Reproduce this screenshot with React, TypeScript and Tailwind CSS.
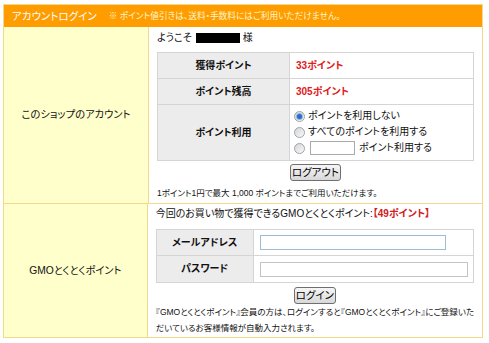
const jp = "font-['Liberation_Sans','Noto_Sans_CJK_JP',sans-serif] [font-feature-settings:'palt']";

function Radio({ checked }: { checked?: boolean }) {
  return (
    <span className="flex size-[11px] shrink-0 items-center justify-center rounded-full border border-[#9ea4aa] bg-gradient-to-br from-[#d4d4d4] to-[#fafafa]">
      {checked && <span className="size-[5px] rounded-full bg-[#2c6cc4] ring-1 ring-[#8fb6e8]" />}
    </span>
  );
}

function Btn({ label, w }: { label: string; w: string }) {
  return (
    <button
      className={`${w} flex h-[17px] items-center justify-center whitespace-nowrap rounded-[3px] border border-[#6f6f6f] bg-gradient-to-b from-[#f6f6f6] to-[#d8d8d8] p-0 text-[10.5px] leading-[15px] text-black`}
    >
      {label}
    </button>
  );
}

export default function App() {
  return (
    <div className={`${jp} min-h-[343px] w-[489px] bg-white pl-[3px] pt-[4px] text-[10px] leading-[16px] text-[#111]`}>
      <div className="w-[480px] border border-[#f5d98b]">
        {/* Header */}
        <div className="flex h-[22px] items-center gap-[12px] whitespace-nowrap bg-[#ff9c00] px-[8px]">
          <span className="text-[10.5px] text-white">アカウントログイン</span>
          <span className="text-[8.7px] text-[#fff6c8]">※ ポイント値引きは、送料・手数料にはご利用いただけません。</span>
        </div>

        {/* Shop account */}
        <div className="flex h-[177px] border-b border-[#f5d98b]">
          <div className="flex w-[145px] items-center justify-center border-r border-[#f5d98b] bg-[#ffffcc] text-[10.3px]">
            このショップのアカウント
          </div>
          <div className="flex flex-1 flex-col px-[8px] pt-[3px]">
            <div className="flex h-[16px] items-center">
              <span>ようこそ</span>
              <span className="ml-[4px] mr-[3px] h-[10px] w-[44px] bg-black" />
              <span>様</span>
            </div>

            <div className="mt-[6px] border border-[#d5d5d5]">
              <div className="flex h-[26px] border-b border-[#d5d5d5]">
                <div className="flex w-[132px] items-center justify-center border-r border-[#d5d5d5] bg-[#ececec] font-bold">獲得ポイント</div>
                <div className="flex items-center pl-[6px] font-bold text-[#e0201c]">33ポイント</div>
              </div>
              <div className="flex h-[26px] border-b border-[#d5d5d5]">
                <div className="flex w-[132px] items-center justify-center border-r border-[#d5d5d5] bg-[#ececec] font-bold">ポイント残高</div>
                <div className="flex items-center pl-[6px] font-bold text-[#e0201c]">305ポイント</div>
              </div>
              <div className="flex h-[55px]">
                <div className="flex w-[132px] items-center justify-center border-r border-[#d5d5d5] bg-[#ececec] font-bold">ポイント利用</div>
                <div className="flex flex-col pl-[4px] pt-[3px]">
                  <label className="flex h-[16px] items-center gap-[3px]">
                    <Radio checked />
                    <span>ポイントを利用しない</span>
                  </label>
                  <label className="flex h-[16px] items-center gap-[3px]">
                    <Radio />
                    <span>すべてのポイントを利用する</span>
                  </label>
                  <label className="flex h-[16px] items-center gap-[3px]">
                    <Radio />
                    <span className="ml-[2px] h-[14px] w-[45px] border border-[#a9a9a9] bg-white" />
                    <span className="ml-[1px]">ポイント利用する</span>
                  </label>
                </div>
              </div>
            </div>

            <div className="mt-[3px] flex justify-center">
              <Btn label="ログアウト" w="w-[51px]" />
            </div>
            <p className="mt-[4px] whitespace-nowrap text-[8.5px]">1ポイント1円で最大 1,000 ポイントまでご利用いただけます。</p>
          </div>
        </div>

        {/* GMO points */}
        <div className="flex h-[133px]">
          <div className="flex w-[145px] items-center justify-center border-r border-[#f5d98b] bg-[#ffffcc] text-[10.3px]">
            GMOとくとくポイント
          </div>
          <div className="flex flex-1 flex-col px-[8px] pt-[2px]">
            <p className="h-[16px] whitespace-nowrap">
              今回のお買い物で獲得できるGMOとくとくポイント:<span className="font-bold text-[#d0201c]">【49ポイント】</span>
            </p>

            <div className="mt-[7px] border border-[#d5d5d5]">
              <div className="flex h-[26px] border-b border-[#d5d5d5]">
                <div className="flex w-[97px] items-center justify-center border-r border-[#d5d5d5] bg-[#ececec] font-bold">メールアドレス</div>
                <div className="flex items-center pl-[6px]">
                  <span className="h-[15px] w-[186px] border border-[#9fbdd2] bg-white" />
                </div>
              </div>
              <div className="flex h-[26px]">
                <div className="flex w-[97px] items-center justify-center border-r border-[#d5d5d5] bg-[#ececec] font-bold">パスワード</div>
                <div className="flex items-center pl-[6px]">
                  <span className="h-[15px] w-[208px] border border-[#c4c4c4] bg-white" />
                </div>
              </div>
            </div>

            <div className="mt-[4px] flex justify-center">
              <Btn label="ログイン" w="w-[42px]" />
            </div>
            <p className="whitespace-nowrap text-[8.5px] leading-[16px]">
              『GMOとくとくポイント』会員の方は、ログインすると『GMOとくとくポイント』にご登録いた
              <br />
              だいているお客様情報が自動入力されます。
            </p>
          </div>
        </div>
      </div>
    </div>
  );
}
